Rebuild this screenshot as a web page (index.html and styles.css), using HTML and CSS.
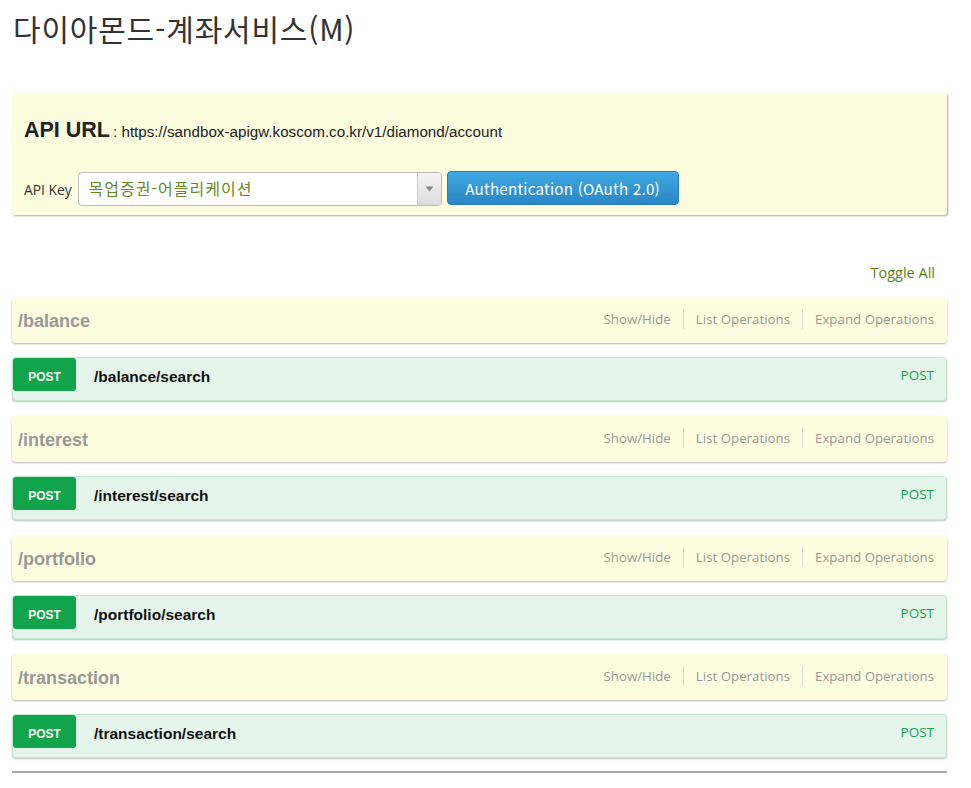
FILE: index.html
```html
<!DOCTYPE html>
<html lang="ko">
<head>
<meta charset="utf-8">
<title>다이아몬드-계좌서비스(M)</title>
<link rel="stylesheet" href="styles.css">
</head>
<body>
<div class="page">
  <h1 class="title">다이아몬드-계좌서비스(M)</h1>

  <div class="api-panel">
    <div class="api-url"><span class="api-url-label">API URL</span><span class="api-url-value"> : https://sandbox-apigw.koscom.co.kr/v1/diamond/account</span></div>
    <div class="api-key">
      <span class="api-key-label">API Key</span>
      <div class="select">
        <span class="select-value">목업증권-어플리케이션</span>
        <span class="select-arrow"><svg width="9" height="6" viewBox="0 0 9 6"><path d="M0.5 0.5h8L4.5 5.5z" fill="#888"/></svg></span>
      </div>
      <button class="auth-btn">Authentication (OAuth 2.0)</button>
    </div>
  </div>

  <div class="toggle-row"><a class="toggle-all">Toggle All</a></div>

  <div class="resources">
    <div class="resource">
      <div class="res-head">
        <span class="res-name">/balance</span>
        <div class="res-links"><a>Show/Hide</a><span class="sep"></span><a>List Operations</a><span class="sep"></span><a>Expand Operations</a></div>
      </div>
      <div class="op">
        <span class="badge">POST</span>
        <span class="op-path">/balance/search</span>
        <span class="op-method">POST</span>
      </div>
    </div>

    <div class="resource">
      <div class="res-head">
        <span class="res-name">/interest</span>
        <div class="res-links"><a>Show/Hide</a><span class="sep"></span><a>List Operations</a><span class="sep"></span><a>Expand Operations</a></div>
      </div>
      <div class="op">
        <span class="badge">POST</span>
        <span class="op-path">/interest/search</span>
        <span class="op-method">POST</span>
      </div>
    </div>

    <div class="resource">
      <div class="res-head">
        <span class="res-name">/portfolio</span>
        <div class="res-links"><a>Show/Hide</a><span class="sep"></span><a>List Operations</a><span class="sep"></span><a>Expand Operations</a></div>
      </div>
      <div class="op">
        <span class="badge">POST</span>
        <span class="op-path">/portfolio/search</span>
        <span class="op-method">POST</span>
      </div>
    </div>

    <div class="resource">
      <div class="res-head">
        <span class="res-name">/transaction</span>
        <div class="res-links"><a>Show/Hide</a><span class="sep"></span><a>List Operations</a><span class="sep"></span><a>Expand Operations</a></div>
      </div>
      <div class="op">
        <span class="badge">POST</span>
        <span class="op-path">/transaction/search</span>
        <span class="op-method">POST</span>
      </div>
    </div>
  </div>

  <hr class="bottom-rule">
</div>
</body>
</html>
```

FILE: styles.css
```css
* { box-sizing: border-box; }

body {
  margin: 0;
  background: #fff;
  font-family: "Liberation Sans", Arial, sans-serif;
  color: #333;
}

.page {
  width: 935px;
  margin-left: 12px;
}

.title {
  margin: 0;
  padding: 7px 0 0 1px;
  height: 93px;
  font-family: "Noto Sans CJK KR", sans-serif;
  font-weight: 400;
  font-size: 30px;
  letter-spacing: 0.8px;
  line-height: 42px;
  color: #333;
}

.api-panel {
  background: #fcfcdf;
  border-radius: 3px;
  box-shadow: 1px 1px 2px rgba(0,0,0,0.35);
  height: 122px;
  padding: 25px 12px 0 12px;
}

.api-url {
  height: 34px;
  display: flex;
  align-items: baseline;
  color: #222;
}

.api-url-label {
  font-weight: bold;
  font-size: 21.5px;
}

.api-url-value {
  font-size: 15.2px;
  margin-left: 3px;
}

.api-key {
  margin-top: 20px;
  display: flex;
  align-items: center;
}

.api-key-label {
  font-family: "Open Sans", sans-serif;
  font-size: 13.8px;
  color: #333;
  margin-right: 6px;
}

.select {
  width: 364px;
  height: 34px;
  border: 1px solid #bbb;
  border-radius: 4px;
  background: #fff;
  display: flex;
  align-items: stretch;
  overflow: hidden;
}

.select-value {
  flex: 1;
  padding-left: 10px;
  font-family: "Noto Sans CJK KR", sans-serif;
  font-size: 16px;
  letter-spacing: 1px;
  line-height: 31px;
  color: #668a1f;
}

.select-arrow {
  width: 24px;
  border-left: 1px solid #c8c8c8;
  background: linear-gradient(#f4f4f4, #dcdcdc);
  display: flex;
  align-items: center;
  justify-content: center;
}

.auth-btn {
  margin-left: 5px;
  width: 232px;
  height: 34px;
  margin-top: -2px;
  border: 1px solid #2a7db5;
  border-radius: 4px;
  background: linear-gradient(#3ea8e2, #2a86c4);
  color: #fff;
  font-family: "Noto Sans CJK KR", sans-serif;
  font-size: 15.2px;
  letter-spacing: 0.2px;
  line-height: 20px;
  padding: 0;
}

.toggle-row {
  display: flex;
  justify-content: flex-end;
  padding: 47px 12px 0 0;
  height: 82px;
}

.toggle-all {
  font-family: "Open Sans", sans-serif;
  font-size: 14.5px;
  line-height: 22px;
  color: #5e7f14;
}

.resources {
  display: flex;
  flex-direction: column;
  gap: 15px;
}

.resource {
  display: flex;
  flex-direction: column;
  gap: 14px;
}

.res-head {
  height: 46px;
  background: #fffde0;
  border-radius: 4px;
  box-shadow: 0 1px 2px rgba(0,0,0,0.3);
  display: flex;
  align-items: center;
  justify-content: space-between;
  padding: 3px 13px 0 6px;
}

.res-name {
  font-family: "Liberation Sans", Arial, sans-serif;
  font-weight: bold;
  font-size: 18px;
  color: #999;
}

.res-links {
  display: flex;
  align-items: center;
  margin-bottom: 6px;
  font-family: "Open Sans", sans-serif;
  font-size: 13.3px;
  color: #999;
}

.sep {
  width: 1px;
  height: 20px;
  background: #ddd;
  margin: 0 12px;
}

.op {
  height: 44px;
  background: #e6f5ec;
  border: 1px solid #c3e8d1;
  border-radius: 4px;
  box-shadow: 0 1px 2px rgba(0,0,0,0.25);
  display: flex;
  align-items: flex-start;
  padding-right: 12px;
}

.badge {
  width: 63px;
  height: 33px;
  background: #10a54a;
  border-radius: 3px;
  color: #fff;
  font-weight: bold;
  font-size: 12px;
  line-height: 33px;
  padding-top: 3px;
  text-align: center;
}

.op-path {
  margin-left: 18px;
  font-weight: bold;
  font-size: 15.5px;
  line-height: 33px;
  padding-top: 2px;
  color: #111;
  flex: 1;
}

.op-method {
  font-family: "Open Sans", sans-serif;
  font-size: 13.5px;
  line-height: 32px;
  padding-top: 1px;
  color: #10a54a;
}

.bottom-rule {
  margin: 13px 0 0 0;
  border: 0;
  border-top: 2px solid #aaa;
  height: 0;
}
```
